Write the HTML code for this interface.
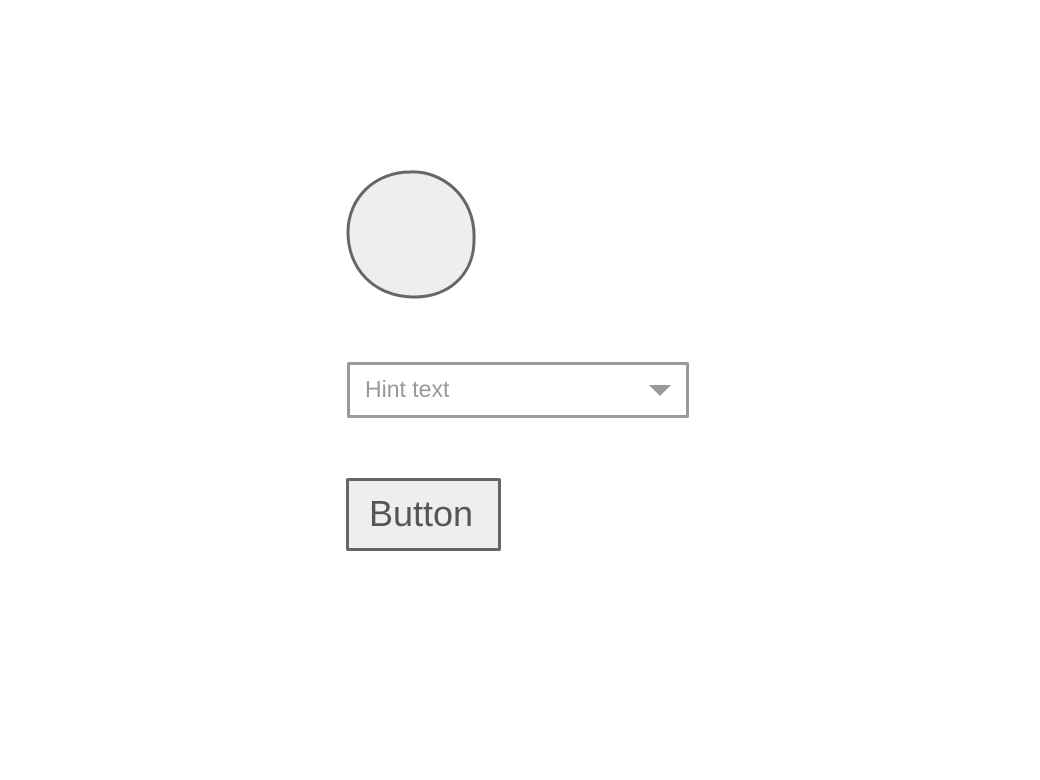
<!DOCTYPE html>
<html><head><style>
body{margin:0;width:1040px;height:780px;background:#fff;position:relative;font-family:"Comic Sans MS","Liberation Sans",sans-serif;overflow:hidden}
.dd{position:absolute;left:347px;top:362px;width:336px;height:50px;border:3px solid #999;border-radius:2px;background:#fff}
.dd span{position:absolute;left:15px;top:11px;font-size:23px;color:#999}
.tri{position:absolute;left:649px;top:385px;width:0;height:0;border-left:11px solid transparent;border-right:11px solid transparent;border-top:11px solid #999}
.btn{position:absolute;left:346px;top:478px;width:149px;height:67px;border:3px solid #666;border-radius:2px;background:#eee}
.btn span{position:absolute;left:20px;top:12px;font-size:36px;color:#555}
</style></head><body>
<svg style="position:absolute;left:0;top:0" width="1040" height="780">
<path d="M410 172 C440 170 476 195 474 240 C474 275 448 298 412 297 C375 296 348 270 348 232 C348 198 375 172 410 172 Z" fill="#eee" stroke="#666" stroke-width="3"/>
</svg>
<div class="dd"><span>Hint text</span></div>
<div class="tri"></div>
<div class="btn"><span>Button</span></div>
</body></html>
